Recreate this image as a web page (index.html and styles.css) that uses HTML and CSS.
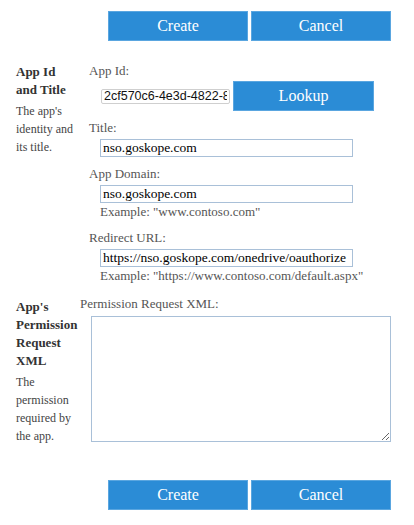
FILE: index.html
```html
<!DOCTYPE html>
<html>
<head>
<meta charset="utf-8">
<link rel="stylesheet" href="styles.css">
</head>
<body>
<div class="page">
  <div class="actions actions-top">
    <button class="btn btn-action">Create</button>
    <button class="btn btn-action">Cancel</button>
  </div>

  <div class="section section-app">
    <div class="side side-app">
      <div class="side-title">App Id and Title</div>
      <div class="side-desc">The app's identity and its title.</div>
    </div>
    <div class="fields">
      <div class="field field-first">
        <label class="label">App Id:</label>
        <div class="lookup-row">
          <input class="input-id" type="text" value="2cf570c6-4e3d-4822-8a5b-1f2e3d4c5b6a">
          <button class="btn btn-lookup">Lookup</button>
        </div>
      </div>
      <div class="field">
        <label class="label">Title:</label>
        <input class="input-text" type="text" value="nso.goskope.com">
      </div>
      <div class="field">
        <label class="label">App Domain:</label>
        <input class="input-text" type="text" value="nso.goskope.com">
        <div class="example">Example: "www.contoso.com"</div>
      </div>
      <div class="field">
        <label class="label">Redirect URL:</label>
        <input class="input-text" type="text" value="https://nso.goskope.com/onedrive/oauthorize">
        <div class="example">Example: "https://www.contoso.com/default.aspx"</div>
      </div>
    </div>
  </div>

  <div class="section section-perm">
    <div class="side side-perm">
      <div class="side-title">App's Permission Request XML</div>
      <div class="side-desc">The permission required by the app.</div>
    </div>
    <div class="fields">
      <div class="field field-first">
        <label class="label">Permission Request XML:</label>
        <textarea class="xml"></textarea>
      </div>
    </div>
  </div>

  <div class="actions actions-bottom">
    <button class="btn btn-action">Create</button>
    <button class="btn btn-action">Cancel</button>
  </div>
</div>
</body>
</html>
```

FILE: styles.css
```css
html, body {
  margin: 0;
  padding: 0;
  background: #ffffff;
}

body {
  font-family: "Liberation Serif", "DejaVu Serif", serif;
  color: #333333;
}

.page {
  width: 414px;
}

.actions {
  display: flex;
  gap: 3px;
  padding-left: 108px;
}

.actions-top {
  margin-top: 11px;
}

.actions-bottom {
  margin-top: 35px;
}

.btn {
  font-family: "Liberation Serif", "DejaVu Serif", serif;
  font-size: 16px;
  color: #ffffff;
  background: #2b8cd6;
  border: 1px solid #5aa6e0;
  padding: 0;
  margin: 0;
  cursor: pointer;
}

.btn-action {
  width: 140px;
  height: 30px;
}

.section {
  display: grid;
  padding-left: 16px;
}

.section-app {
  grid-template-columns: 73px 1fr;
  margin-top: 21px;
}

.section-perm {
  grid-template-columns: 64px 1fr;
  margin-top: 10px;
}

.side-app {
  padding-top: 1px;
  padding-right: 12px;
}

.side-perm {
  padding-top: 3px;
  padding-right: 1px;
}

.side-title {
  font-weight: bold;
  font-size: 13px;
  line-height: 18px;
  color: #333333;
}

.side-desc {
  font-size: 12px;
  line-height: 18px;
  color: #444444;
  margin-top: 3px;
}

.fields {
  display: flex;
  flex-direction: column;
}

.field {
  display: flex;
  flex-direction: column;
  align-items: flex-start;
  margin-top: 8px;
}

.field-first {
  margin-top: 0;
}

.label {
  display: block;
  font-size: 13px;
  line-height: 18px;
  color: #555555;
}

.lookup-row {
  display: flex;
  align-items: center;
  gap: 3px;
  margin-left: 12px;
  margin-top: 1px;
}

.input-id {
  box-sizing: border-box;
  width: 129px;
  height: 15px;
  margin: 0;
  padding: 0 2px;
  border: 1px solid #cfcfcf;
  border-radius: 2px;
  font-family: "Liberation Sans", Arial, sans-serif;
  font-size: 12.5px;
  color: #111111;
  background: #ffffff;
  outline: none;
}

.btn-lookup {
  width: 141px;
  height: 30px;
}

.input-text {
  box-sizing: border-box;
  width: 253px;
  height: 18px;
  margin: 2px 0 0 11px;
  padding: 0 2px;
  border: 1px solid #a9c0d8;
  border-radius: 0;
  font-family: "Liberation Serif", "DejaVu Serif", serif;
  font-size: 13.5px;
  color: #000000;
  background: #ffffff;
  outline: none;
}

.example {
  font-size: 13px;
  line-height: 18px;
  color: #555555;
  margin-left: 11px;
}

.xml {
  box-sizing: border-box;
  display: block;
  width: 300px;
  height: 126px;
  margin: 3px 0 0 11px;
  padding: 2px;
  border: 1px solid #a9c0d8;
  border-radius: 0;
  background: #ffffff;
  font-family: "Liberation Serif", serif;
  font-size: 13px;
  outline: none;
}
```
